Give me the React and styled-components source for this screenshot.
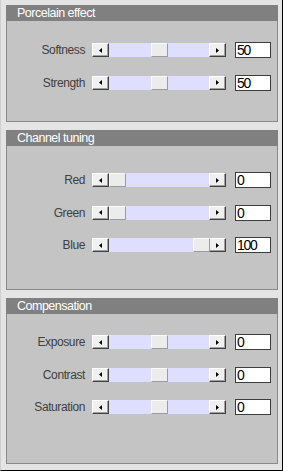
import React from 'react';
import styled, { createGlobalStyle } from 'styled-components';

const GlobalStyle = createGlobalStyle`
  body {
    margin: 0;
    background: #e4e4e4;
    font-family: "Liberation Sans", Arial, sans-serif;
  }
`;

const Window = styled.div`
  box-sizing: border-box;
  width: 283px;
  height: 471px;
  padding: 5px 4px 6px 5px;
  background: #e4e4e4;
  border-left: 1px solid #cfcfcf;
  border-right: 1px solid #000;
  border-bottom: 1px solid #000;
  display: flex;
  flex-direction: column;
  gap: 8px;
`;

const Panel = styled.section`
  box-sizing: border-box;
  height: ${p => p.$height}px;
  display: flex;
  flex-direction: column;
  background: #c4c4c4;
  border: 1px solid #8a8a8a;
  border-top: none;
`;

const Header = styled.div`
  height: 16px;
  margin: 0 -1px;
  padding-left: 11px;
  background: #808080;
  color: #fff;
  font-size: 12.5px;
  letter-spacing: -0.5px;
  line-height: 16px;
`;

const Body = styled.div`
  padding-top: ${p => p.$padTop}px;
  display: flex;
  flex-direction: column;
  gap: 16.5px;
`;

const Row = styled.div`
  display: flex;
  align-items: center;
  height: 16px;
`;

const Label = styled.span`
  width: 78px;
  text-align: right;
  color: #404040;
  font-size: 12px;
  letter-spacing: -0.4px;
  margin-right: 7px;
`;

const Slider = styled.div`
  display: flex;
  width: 134px;
  height: 14px;
  margin-right: 9px;
`;

const ArrowButton = styled.div`
  box-sizing: border-box;
  width: 17px;
  height: 14px;
  background: #f0f0f0;
  border-top: 1px solid #fff;
  border-left: 1px solid #fff;
  border-right: 1px solid #404040;
  border-bottom: 1px solid #404040;
  box-shadow: inset -1px -1px 0 #a0a0a0;
  display: flex;
  align-items: center;
  justify-content: center;
`;

const Track = styled.div`
  position: relative;
  flex: 1;
  background: #dedefe;
`;

const Thumb = styled.div`
  position: absolute;
  top: 0;
  box-sizing: border-box;
  width: 17px;
  height: 14px;
  background: #ececec;
  border-top: 1px solid #fafafa;
  border-left: 1px solid #fafafa;
  border-right: 1px solid #9c9c9c;
  border-bottom: 1px solid #9c9c9c;
`;

const ValueBox = styled.div`
  box-sizing: border-box;
  width: 36px;
  height: 16px;
  background: #fff;
  border: 1px solid #3c3c3c;
  padding-left: 1px;
  font-size: 14px;
  letter-spacing: -1.3px;
  line-height: 14px;
  color: #000;
`;

const Triangle = ({ dir }) => (
  <svg width="3" height="5" viewBox="0 0 3 5">
    <polygon points={dir === 'left' ? '3,0 3,5 0,2.5' : '0,0 0,5 3,2.5'} fill="#000" />
  </svg>
);

const SliderRow = ({ label, value, pos }) => (
  <Row>
    <Label>{label}</Label>
    <Slider>
      <ArrowButton><Triangle dir="left" /></ArrowButton>
      <Track>
        <Thumb style={{ left: `${Math.round(pos * 84)}px` }} />
      </Track>
      <ArrowButton><Triangle dir="right" /></ArrowButton>
    </Slider>
    <ValueBox>{value}</ValueBox>
  </Row>
);

const panels = [
  {
    title: 'Porcelain effect', height: 117, padTop: 21,
    rows: [
      { label: 'Softness', value: 50, pos: 0.5 },
      { label: 'Strength', value: 50, pos: 0.5 },
    ],
  },
  {
    title: 'Channel tuning', height: 160, padTop: 26,
    rows: [
      { label: 'Red', value: 0, pos: 0 },
      { label: 'Green', value: 0, pos: 0 },
      { label: 'Blue', value: 100, pos: 1 },
    ],
  },
  {
    title: 'Compensation', height: 166, padTop: 20,
    rows: [
      { label: 'Exposure', value: 0, pos: 0.5 },
      { label: 'Contrast', value: 0, pos: 0.5 },
      { label: 'Saturation', value: 0, pos: 0.5 },
    ],
  },
];

export default function App() {
  return (
    <>
      <GlobalStyle />
      <Window>
        {panels.map(p => (
          <Panel key={p.title} $height={p.height}>
            <Header>{p.title}</Header>
            <Body $padTop={p.padTop}>
              {p.rows.map(r => <SliderRow key={r.label} {...r} />)}
            </Body>
          </Panel>
        ))}
      </Window>
    </>
  );
}
